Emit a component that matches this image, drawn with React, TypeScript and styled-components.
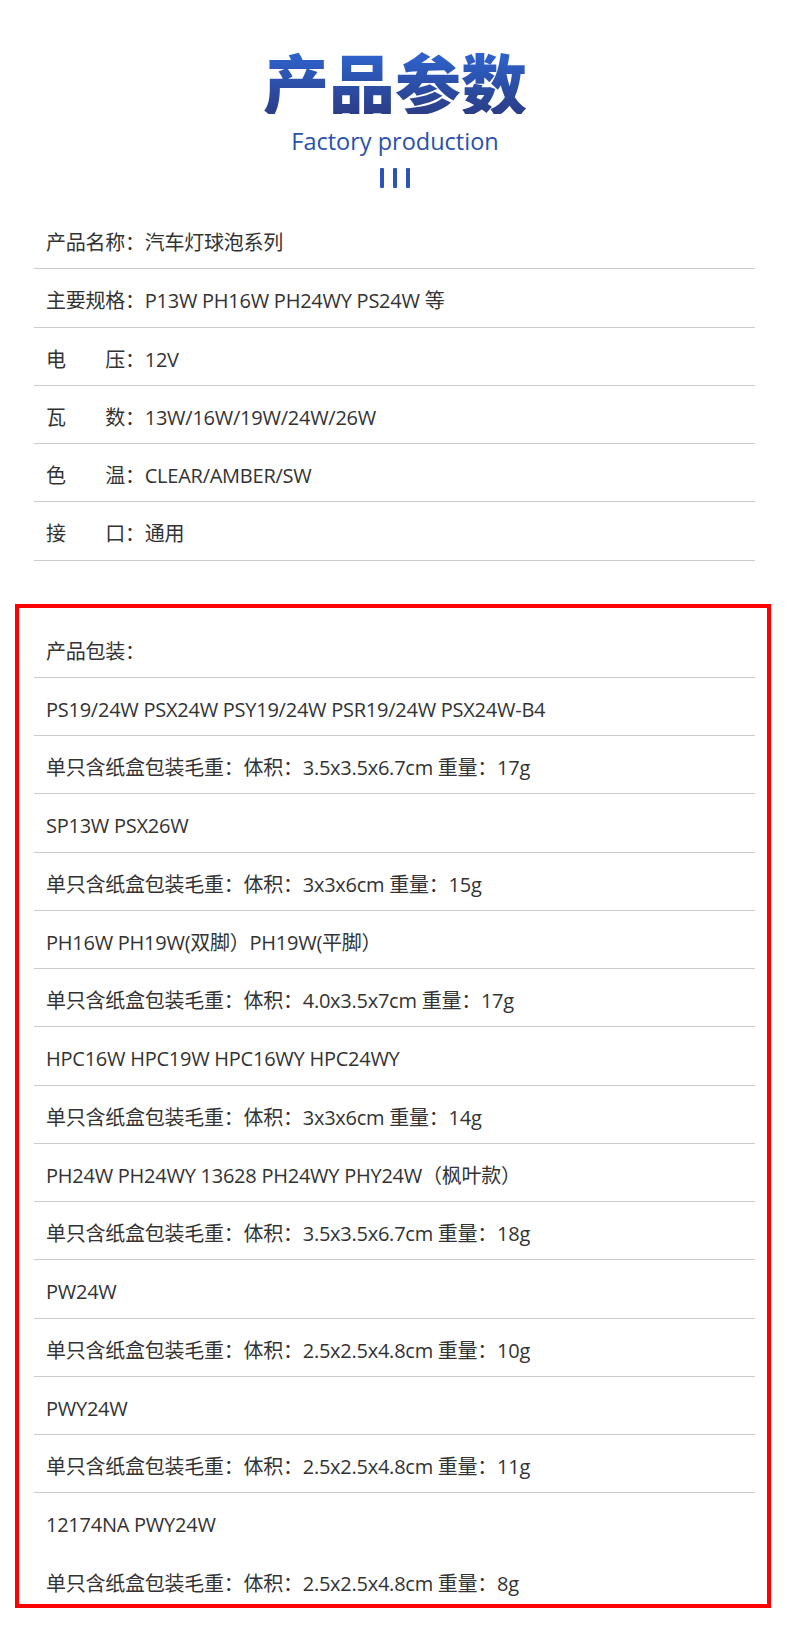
import React from 'react';
import styled, { createGlobalStyle } from 'styled-components';

const GlobalStyle = createGlobalStyle`
  html, body {
    margin: 0;
    padding: 0;
    background: #ffffff;
  }
  body {
    font-family: "Open Sans", "Noto Sans CJK SC", sans-serif;
  }
`;

// 顶部参数
const specs: string[] = [
  '产品名称：汽车灯球泡系列',
  '主要规格：P13W PH16W PH24WY PS24W 等',
  '电　　压：12V',
  '瓦　　数：13W/16W/19W/24W/26W',
  '色　　温：CLEAR/AMBER/SW',
  '接　　口：通用',
];

// 包装信息
const packs: string[] = [
  '产品包装：',
  'PS19/24W PSX24W PSY19/24W PSR19/24W PSX24W-B4',
  '单只含纸盒包装毛重：体积：3.5x3.5x6.7cm 重量：17g',
  'SP13W PSX26W',
  '单只含纸盒包装毛重：体积：3x3x6cm 重量：15g',
  'PH16W PH19W(双脚）PH19W(平脚）',
  '单只含纸盒包装毛重：体积：4.0x3.5x7cm 重量：17g',
  'HPC16W HPC19W HPC16WY HPC24WY',
  '单只含纸盒包装毛重：体积：3x3x6cm 重量：14g',
  'PH24W PH24WY 13628 PH24WY PHY24W（枫叶款）',
  '单只含纸盒包装毛重：体积：3.5x3.5x6.7cm 重量：18g',
  'PW24W',
  '单只含纸盒包装毛重：体积：2.5x2.5x4.8cm 重量：10g',
  'PWY24W',
  '单只含纸盒包装毛重：体积：2.5x2.5x4.8cm 重量：11g',
  '12174NA PWY24W',
  '单只含纸盒包装毛重：体积：2.5x2.5x4.8cm 重量：8g',
];

const Page = styled.div`
  width: 790px;
  background: #ffffff;
  overflow: hidden;
`;

const Header = styled.header`
  display: flex;
  flex-direction: column;
  align-items: center;
  padding-top: 48px;
`;

const Title = styled.h1`
  margin: 0;
  height: 66px;
  font-family: "Noto Sans CJK SC", sans-serif;
  font-size: 66px;
  line-height: 66px;
  font-weight: 900;
  background: linear-gradient(to bottom, #2f67d4 0%, #2b4fa8 55%, #2b3d86 100%);
  -webkit-background-clip: text;
  background-clip: text;
  color: transparent;
`;

const Subtitle = styled.div`
  margin-top: 13px;
  font-size: 23.5px;
  line-height: 28px;
  color: #2a51ad;
`;

const Bars = styled.div`
  display: flex;
  gap: 9.5px;
  margin-top: 13px;
`;

const Bar = styled.span`
  display: block;
  width: 3.5px;
  height: 20px;
  border-radius: 1px;
  background: #2c54b4;
`;

const SpecList = styled.div`
  margin: 23px 35px 0 34px;
`;

const Row = styled.div<{ $line?: boolean; $tail?: boolean }>`
  padding: 21px 0 ${(p) => (p.$tail ? '8px' : '14.25px')} 12px;
  font-size: 20px;
  line-height: 22px;
  letter-spacing: -0.25px;
  color: #333333;
  white-space: nowrap;
  border-bottom: 1px solid ${(p) => (p.$line ? '#cccccc' : 'transparent')};
`;

const PackBox = styled.section`
  margin: 43px 19px 34px 15px;
  padding: 12px 12px 0 15px;
  border: 4px solid #ff0000;
`;

const App: React.FC = () => {
  return (
    <Page>
      <GlobalStyle />
      <Header>
        <Title>产品参数</Title>
        <Subtitle>Factory production</Subtitle>
        <Bars>
          <Bar />
          <Bar />
          <Bar />
        </Bars>
      </Header>

      <SpecList>
        {specs.map((s) => (
          <Row key={s} $line>
            {s}
          </Row>
        ))}
      </SpecList>

      <PackBox>
        {packs.map((s, i) => (
          <Row key={i} $line={i < packs.length - 2} $tail={i === packs.length - 1}>
            {s}
          </Row>
        ))}
      </PackBox>
    </Page>
  );
};

export default App;
